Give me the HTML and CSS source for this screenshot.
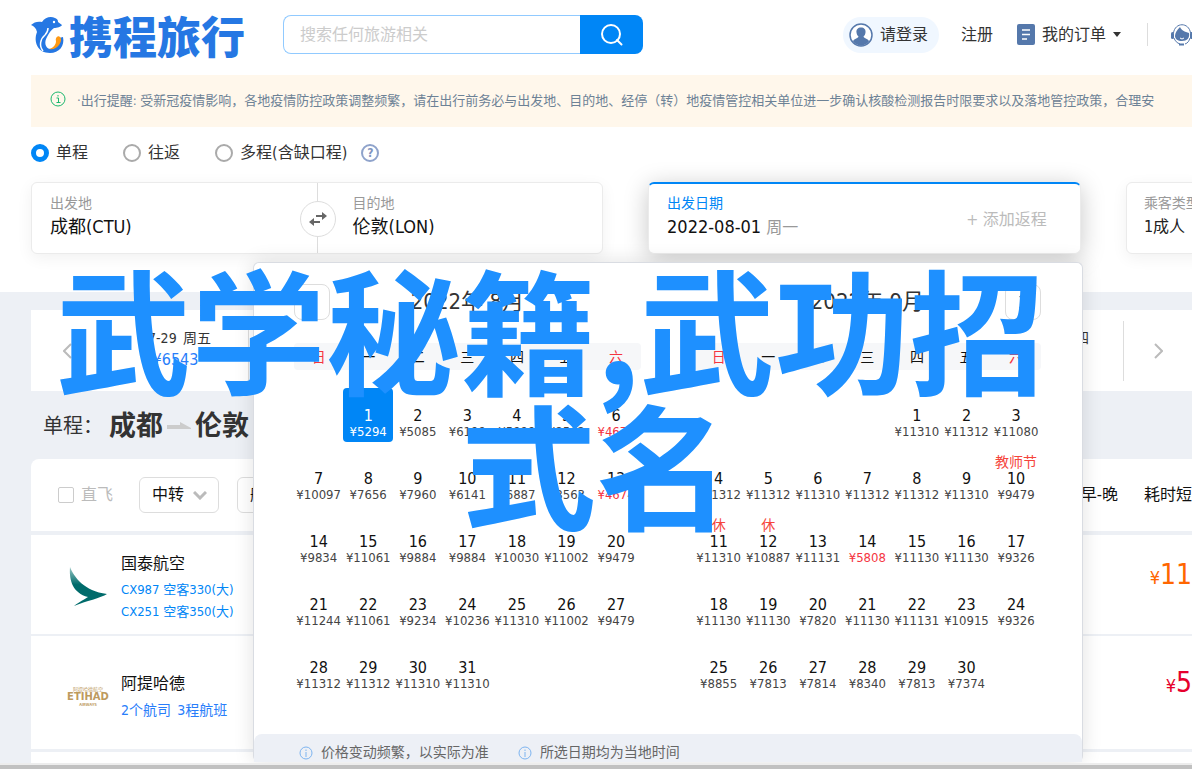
FILE: index.html
```html
<!DOCTYPE html>
<html lang="zh-CN">
<head>
<meta charset="utf-8">
<title>携程旅行</title>
<link rel="stylesheet" href="styles.css">
</head>
<body>
<header class="header">
  <a class="logo" href="#">
    <svg class="logo-mark" viewBox="0 0 34 38" aria-hidden="true">
      <path fill="#2577e3" d="M0 9C3 6 7 5 11 6C14 1 20 0 24 2C27 3 27 5 27 6L31 9C30 11 26 12 23 12C20 14 18 17 16 21C13 26 14 32 19 33C25 33 28 28 28 22L32 21C34 30 28 37 19 37C7 37 2 26 6 16C5 12 3 10 0 9Z"/>
      <path fill="#ff9913" d="M18 33C23 32 25 28 25 25C24 22 27 19 29 21C31 23 30 26 28 29C25 33 21 34 18 33Z"/>
      <path fill="none" stroke="#fff" stroke-width="1.500" d="M12 35C8 30 9 23 14 19C16 17 17 15 17 12"/>
      <circle cx="23" cy="6" r="1.200" fill="#fff"/>
    </svg>
    <span class="logo-text">携程旅行</span>
  </a>
  <form class="search">
    <input class="search-input" type="text" placeholder="搜索任何旅游相关" aria-label="搜索">
    <button class="search-button" type="button" aria-label="搜索">
      <svg viewBox="0 0 22 22" width="22" height="22" fill="none" stroke="#fff" stroke-width="2" stroke-linecap="round"><circle cx="10" cy="10" r="9"/><path d="M16 16L20.500 20.500"/></svg>
    </button>
  </form>
  <nav class="nav">
    <a class="login" href="#">
      <svg viewBox="0 0 24 24" width="24" height="24"><circle cx="12" cy="12" r="11" fill="#fff" stroke="#5578ab" stroke-width="1.500"/><path fill="#5578ab" d="M12 4.500c3 0 5 2 4.500 5-.2 2-1 3-2 4 .5 2 5 2 5.500 5C16 24 8 24 4 18.500c.5-3 5-3 5.500-5-1-1-1.800-2-2-4C7 6.500 9 4.500 12 4.500Z"/></svg>
      请登录
    </a>
    <a class="register" href="#">注册</a>
    <a class="orders" href="#">
      <svg viewBox="0 0 18 21" width="18" height="21"><rect width="18" height="21" rx="2" fill="#5578ab"/><path d="M5 6h8M5 10.500h8M5 15h5" stroke="#fff" stroke-width="1.500"/></svg>
      我的订单
      <svg class="caret" viewBox="0 0 8 5" width="8" height="5"><path d="M0 0h8L4 5Z" fill="#333"/></svg>
    </a>
    <span class="nav-line"></span>
    <a class="service" href="#" aria-label="客服">
      <svg viewBox="0 0 22 22" width="22" height="22"><path d="M2.500 9C4-2 18-2 19.500 9" fill="none" stroke="#5578ab"/><rect y="8" width="3" height="7" rx="1.500" fill="#5578ab"/><rect x="19" y="8" width="3" height="7" rx="1.500" fill="#5578ab"/><path fill="#5578ab" d="M4 12C4 9 6 6 9 3C10 6 14 8 18 9C19 14 16 17 11 17C7 17 4 15 4 12Z"/><path d="M3 14c1 3 3 5 6 6M19 14c-1 3-2 5-5 6" fill="none" stroke="#5578ab"/><path d="M8 20.500h5" stroke="#5578ab" stroke-width="2"/><path d="M9 14l2 1 2-1" fill="none" stroke="#fff"/></svg>
    </a>
  </nav>
</header>

<main>
  <section class="query">
    <div class="notice">
      <svg viewBox="0 0 16 16" width="16" height="16" fill="none" stroke="#1bb76e"><circle cx="8" cy="8" r="7"/><path d="M6.500 7H8.500V11.500M6.500 11.500h4M8 4v1.500"/></svg>
      <span>·出行提醒: 受新冠疫情影响，各地疫情防控政策调整频繁，请在出行前务必与出发地、目的地、经停（转）地疫情管控相关单位进一步确认核酸检测报告时限要求以及落地管控政策，合理安</span>
    </div>
    <div class="trip-types">
      <label class="trip-type"><input type="radio" name="trip" checked>单程</label>
      <label class="trip-type"><input type="radio" name="trip">往返</label>
      <label class="trip-type"><input type="radio" name="trip">多程(含缺口程)</label>
      <button class="help" type="button">?</button>
    </div>
    <div class="fields">
      <div class="card route">
        <div class="place"><span class="label">出发地</span><span class="value">成都(CTU)</span></div>
        <div class="swap-col">
          <button class="swap" type="button" aria-label="交换"><svg viewBox="0 0 18 14" width="18" height="14" fill="#666"><path d="M7 3h6V0l5 4-5 4V5H7ZM11 9H5V6L0 10l5 4v-3h6Z"/></svg></button>
        </div>
        <div class="place"><span class="label">目的地</span><span class="value">伦敦(LON)</span></div>
      </div>
      <div class="card date">
        <div class="date-main">
          <span class="label active">出发日期</span>
          <span class="value">2022-08-01 <small class="weekday">周一</small></span>
        </div>
        <button class="add-return" type="button">+ 添加返程</button>
        <div class="calendar">
          <div class="months" id="months"></div>
          <div class="tips">
            <span class="tip"><svg viewBox="0 0 14 14" width="14" height="14" fill="none" stroke="#7db4f0"><circle cx="7" cy="7" r="6"/><path d="M7 6v5M7 3.500v1.500"/></svg>价格变动频繁，以实际为准</span>
            <span class="tip"><svg viewBox="0 0 14 14" width="14" height="14" fill="none" stroke="#7db4f0"><circle cx="7" cy="7" r="6"/><path d="M7 6v5M7 3.500v1.500"/></svg>所选日期均为当地时间</span>
          </div>
        </div>
      </div>
      <div class="card passenger"><span class="label">乘客类型</span><span class="value small">1成人</span></div>
    </div>
  </section>

  <section class="results">
    <div class="date-strip">
      <button class="strip-arrow" type="button" aria-label="前一天"><svg viewBox="0 0 9 16" width="9" height="16" fill="none" stroke="#bbb" stroke-width="2"><path d="M8 1L1 8l7 7"/></svg></button>
      <a class="strip-day" href="#"><span>07-29&ensp;周五</span><span class="strip-price">¥6543</span></a>
      <a class="strip-day last" href="#"><span>08-04&ensp;周四</span></a>
      <button class="strip-arrow next" type="button" aria-label="后一天"><svg viewBox="0 0 9 16" width="9" height="16" fill="none" stroke="#bbb" stroke-width="2"><path d="M1 1l7 7-7 7"/></svg></button>
    </div>
    <h1 class="title"><span class="title-type">单程：</span>成都<svg viewBox="0 0 24 8" width="24" height="8"><path d="M0 3h13V0l11 6v1H0Z" fill="#ccc"/></svg>伦敦</h1>
    <div class="filters">
      <label class="direct"><input type="checkbox">直飞</label>
      <button class="filter" type="button">中转<svg viewBox="0 0 14 9" width="14" height="9" fill="none" stroke="#bbb" stroke-width="3"><path d="M1 1l6 6 6-6"/></svg></button>
      <button class="filter" type="button">航空公司</button>
      <div class="sorts"><button type="button">早-晚</button><button type="button">耗时短</button></div>
    </div>
    <article class="flight">
      <svg class="airline-logo" viewBox="0 0 44 44" aria-hidden="true"><defs><linearGradient id="wing" x1="0" y1="0" x2="0" y2="1"><stop offset="0" stop-color="#9cc9c7"/><stop offset=".45" stop-color="#006b6b"/></linearGradient></defs><path fill="url(#wing)" d="M4 2C8 12 18 26 41 29C35 33 20 36 8 41C13 37 19 34 22 32C7 28 3 16 4 2Z"/></svg>
      <div class="airline"><h2>国泰航空</h2><a href="#">CX987 空客330(大)</a><a href="#">CX251 空客350(大)</a></div>
      <div class="price"><small>¥</small>11</div>
    </article>
    <article class="flight tall">
      <div class="airline-logo etihad"><svg viewBox="0 0 44 24" width="44" height="24" fill="#bd9a5e" font-family="Noto Sans CJK SC, sans-serif" text-anchor="middle"><text x="22" y="7" font-size="5">阿提哈德航空</text><text x="22" y="16" font-size="10" font-weight="700" font-family="DejaVu Sans, sans-serif">ETIHAD</text><text x="22" y="22" font-size="4" font-weight="700">AIRWAYS</text></svg></div>
      <div class="airline"><h2>阿提哈德</h2><a class="soft" href="#">2个航司&ensp;3程航班</a></div>
      <div class="price red"><small>¥</small>5</div>
    </article>
    <article class="flight-peek"></article>
  </section>
</main>
<div class="bottom-bar"></div>
<div class="banner"><span>武学秘籍,武功招</span><span class="banner-second">式名</span></div>
<script src="calendar.js"></script>
</body>
</html>
```
FILE: styles.css
```css
* { box-sizing: border-box; }
body {
  margin: 0;
  position: relative;
  overflow-x: hidden;
  background: #fff;
  color: #333;
  font: 16px/20px "DejaVu Sans Condensed", "Noto Sans", "Noto Sans CJK SC", sans-serif;
}
a { color: inherit; text-decoration: none; }
button, input { font: inherit; color: inherit; }
button { padding: 0; border: 0; background: none; cursor: pointer; }
svg { display: block; flex: none; }
h1, h2 { margin: 0; }

.header { display: flex; align-items: center; height: 75px; padding: 0 0 6px 31px; }
.logo { display: flex; align-items: center; gap: 4px; width: 252px; }
.logo-mark { width: 34px; height: 38px; }
.logo-text { color: #2577e3; font: 900 44px/44px "Noto Sans CJK SC", sans-serif; white-space: nowrap; }
.search { display: flex; width: 360px; height: 39px; }
.search-input { flex: 1; min-width: 0; padding: 0 16px; border: 1px solid #91caff; border-right: 0; border-radius: 8px 0 0 8px; outline: 0; }
.search-input::placeholder { color: #ccc; opacity: 1; }
.search-button { display: flex; align-items: center; justify-content: center; width: 63px; border-radius: 0 8px 8px 0; background: #0086f6; }
.nav { display: flex; align-items: center; margin: 0 -1px 0 auto; white-space: nowrap; }
.login { display: flex; align-items: center; gap: 7px; height: 36px; padding: 0 11px 0 6px; border-radius: 18px; background: #f0f7ff; }
.register { margin: 0 24px 0 22px; }
.orders { display: flex; align-items: center; gap: 7px; }
.nav-line { width: 1px; height: 23px; margin: 0 23px 0 26px; background: #ddd; }

.query { padding-left: 31px; padding-bottom: 38px; }
.notice { display: flex; gap: 11px; height: 52px; padding: 16px 0 0 19px; background: #fff7eb; color: #6d8296; font-size: 13px; white-space: nowrap; overflow: hidden; }
.trip-types { display: flex; align-items: center; height: 55px; padding-bottom: 3px; }
.trip-type { display: flex; align-items: center; gap: 7px; margin-right: 35px; }
.trip-type:nth-child(3) { margin-right: 14px; }
.trip-type input { appearance: none; width: 18px; height: 18px; margin: 0; border: 2px solid #aaa; border-radius: 50%; background: #fff; }
.trip-type input:checked { border: 5px solid #0086f6; }
.help { width: 18px; height: 18px; border: 2px solid #8fa3cb; border-radius: 50%; color: #7f94c0; font-size: 12px; line-height: 14px; font-weight: 700; }

.fields { display: grid; grid-template-columns: 571fr 432fr 66fr; gap: 45px; }
.card { position: relative; min-width: 0; height: 72px; border: 1px solid #ebebeb; border-radius: 6px; background: #fff; box-shadow: 0 4px 16px rgba(0, 0, 0, .06); }
.label { display: block; margin-bottom: 2px; color: #999; font-size: 14px; white-space: nowrap; }
.label.active { color: #0086f6; }
.value { display: block; color: #111; font-size: 18px; line-height: 24px; white-space: nowrap; }
.value.small { font-size: 16px; color: #222; }
.weekday { color: #999; font-size: 16px; }
.route { display: grid; grid-template-columns: 267fr 36px 285fr; padding-left: 18px; }
.place { padding-top: 10px; }
.place:last-child { padding-left: 17px; }
.swap-col { display: flex; align-items: center; justify-content: center; padding-top: 2px; background: linear-gradient(#ddd, #ddd) center / 1px 100% no-repeat; }
.swap { display: flex; align-items: center; justify-content: center; width: 36px; height: 36px; border: 1px solid #ddd; border-radius: 50%; background: #fff; }
.date { z-index: 2; display: flex; justify-content: space-between; padding: 9px 33px 0 18px; border-top: 2px solid #0086f6; box-shadow: 0 4px 24px rgba(0, 0, 0, .22); }
.add-return { height: 54px; color: #bbb; }
.passenger { margin-right: -17px; padding: 10px 0 0 17px; }

.calendar { position: absolute; top: 78px; right: -3px; width: 830px; border: 1px solid #d9dce2; border-bottom: 0; border-radius: 6px; background: #fff; box-shadow: 0 0 20px rgba(0, 0, 0, .12); }
.months { display: flex; justify-content: space-between; padding: 21px 41px 32px 40px; }
.month { width: 347px; }
.month-head { display: grid; grid-template-columns: 36px 1fr 36px; align-items: center; margin-bottom: 23px; text-align: center; font-size: 22px; }
.month-nav { display: flex; align-items: center; justify-content: center; width: 36px; height: 36px; border: 1px solid #ddd; border-radius: 8px; }
.month-nav.next { grid-column: 3; }
.month-name { grid-column: 2; }
.days { width: 100%; table-layout: fixed; border-collapse: separate; border-spacing: 0; color: #111; text-align: center; }
.days th { height: 27px; padding: 0; background: #f6f7f9; font-size: 14px; font-weight: 400; }
.days th:first-child { border-radius: 4px 0 0 4px; }
.days th:last-child { border-radius: 0 4px 4px 0; }
.days .weekend { color: #f5343f; }
.days td { padding: 0 0 9px; }
.days tbody tr:first-child td { padding-top: 18px; }
.days tbody tr:last-child td { padding-bottom: 8px; }
.day { display: flex; flex-direction: column; align-items: center; justify-content: flex-end; width: 100%; height: 54px; padding-bottom: 2px; border-radius: 4px; line-height: 16px; white-space: nowrap; }
.day-price { color: #444; font-size: 13px; }
.day-note { color: #f5453c; font-size: 14px; line-height: 18px; }
.day-price.low { color: #f5343f; }
.day.selected, .day.selected .day-price { background: #0086f6; color: #fff; }
.tips { display: flex; gap: 29px; padding: 9px 45px 0; border-radius: 8px 8px 0 0; background: #edf0f6; color: #666; font-size: 14px; line-height: 19px; }
.tip { display: flex; align-items: center; gap: 8px; }

.results { padding: 18px 0 0 31px; background: #edf0f5; }
.date-strip { display: flex; align-items: center; height: 81px; background: #fff; }
.strip-arrow { display: flex; justify-content: center; width: 72px; }
.strip-arrow.next { width: 68px; }
.strip-day { display: flex; flex-direction: column; align-items: center; justify-content: center; width: 146px; height: 60px; padding-bottom: 3px; border-right: 1px solid #ddd; font-size: 14px; line-height: 21px; }
.strip-price { color: #287dfa; font-size: 16px; }
.strip-day.last { justify-content: flex-start; margin-left: auto; padding: 7px 34px 0 0; width: 160px; align-items: flex-end; }
.title { display: flex; align-items: center; gap: 4px; height: 68px; padding: 2px 0 0 12px; color: #333; font-size: 27px; line-height: 36px; }
.title-type { margin-right: 2px; font-size: 20px; font-weight: 400; }
.filters { display: flex; align-items: center; height: 72px; margin-bottom: 4px; padding-left: 27px; border-radius: 8px 0 0; background: #fff; color: #111; white-space: nowrap; overflow: hidden; }
.direct { display: flex; align-items: center; gap: 7px; margin-right: 26px; color: #bbb; }
.direct input { appearance: none; width: 16px; height: 16px; margin: 0; border: 1px solid #ccc; border-radius: 2px; }
.filter { display: flex; align-items: center; justify-content: center; gap: 9px; height: 36px; margin-right: 18px; padding: 0 11px 0 12px; border: 1px solid #ddd; border-radius: 6px; }
.sorts { display: flex; gap: 26px; margin-left: auto; }
.flight { display: flex; align-items: center; height: 99px; margin-bottom: 2px; padding: 5px 0 0 35px; background: #fff; }
.flight.tall { height: 113px; margin-bottom: 3px; padding-top: 7px; }
.airline-logo { width: 44px; height: 44px; margin-right: 11px; }
.etihad { display: flex; align-items: center; }
.airline { display: flex; flex-direction: column; color: #0086f6; font-size: 13px; line-height: 22px; }
.airline h2 { margin-bottom: 3px; color: #111; font-size: 16px; font-weight: 400; line-height: 24px; }
.airline .soft { color: #287dfa; font-size: 14px; }
.price { margin: 0 0 22px auto; color: #ff6600; font-size: 28px; line-height: 32px; }
.price.red { margin-bottom: 24px; color: #e6002d; }
.price small { font-size: 18px; }
.flight-peek { height: 11px; background: #fff; }
.bottom-bar { position: relative; z-index: 3; height: 6px; border-top: 2px solid #ededed; background: #c1c1c1; }

.banner { position: absolute; z-index: 4; top: 259px; left: 56px; right: 56px; display: flex; flex-direction: column; color: #1e90ff; font: 700 135px/135px "Noto Sans CJK SC", sans-serif; white-space: nowrap; pointer-events: none; }
.banner-second { align-self: center; }
```
FILE: calendar.js
```js
const months = [
  {
    name: "2022年 8月", offset: 1, nav: "prev", selected: 1, low: [6, 13], notes: {},
    prices: [5294, 5085, 6199, 5999, 8562, 4674, 10097, 7656, 7960, 6141, 6887, 8563, 4674,
      9834, 11061, 9884, 9884, 10030, 11002, 9479, 11244, 11061, 9234, 10236, 11310, 11002, 9479,
      11312, 11312, 11310, 11310]
  },
  {
    name: "2022年 9月", offset: 4, nav: "next", selected: 0, low: [14],
    notes: { 10: "教师节", 11: "休", 12: "休" },
    prices: [11310, 11312, 11080, 11312, 11312, 11310, 11312, 11312, 11310, 9479,
      11310, 10887, 11131, 5808, 11130, 11130, 9326, 11130, 11130, 7820, 11130, 11131, 10915, 9326,
      8855, 7813, 7814, 8340, 7813, 7374]
  }
];

function renderDay(month, day) {
  if (day < 1 || day > month.prices.length) return "<td></td>";
  const note = month.notes[day] ? `<span class="day-note">${month.notes[day]}</span>` : "";
  const low = month.low.includes(day) ? " low" : "";
  const selected = month.selected === day ? " selected" : "";
  return `<td><button type="button" class="day${selected}">${note}<span>${day}</span>` +
    `<span class="day-price${low}">¥${month.prices[day - 1]}</span></button></td>`;
}

function renderMonth(month) {
  const path = month.nav === "prev" ? "M8 1L2 7l6 6" : "M2 1l6 6-6 6";
  const color = month.nav === "prev" ? "#ddd" : "#333";
  const button = `<button type="button" class="month-nav ${month.nav}" aria-label="${month.nav === "prev" ? "上个月" : "下个月"}">` +
    `<svg viewBox="0 0 10 14" width="10" height="14" fill="none" stroke="${color}" stroke-width="2"><path d="${path}"/></svg></button>`;
  const name = `<span class="month-name">${month.name}</span>`;
  const heads = [..."日一二三四五六"].map((d, i) => `<th${i % 6 ? "" : ' class="weekend"'}>${d}</th>`).join("");
  let rows = "";
  for (let start = 1 - month.offset; start <= month.prices.length; start += 7) {
    rows += "<tr>" + [0, 1, 2, 3, 4, 5, 6].map(i => renderDay(month, start + i)).join("") + "</tr>";
  }
  return `<div class="month"><div class="month-head">${month.nav === "prev" ? button + name : name + button}</div>` +
    `<table class="days"><thead><tr>${heads}</tr></thead><tbody>${rows}</tbody></table></div>`;
}

document.getElementById("months").innerHTML = months.map(renderMonth).join("");
```
